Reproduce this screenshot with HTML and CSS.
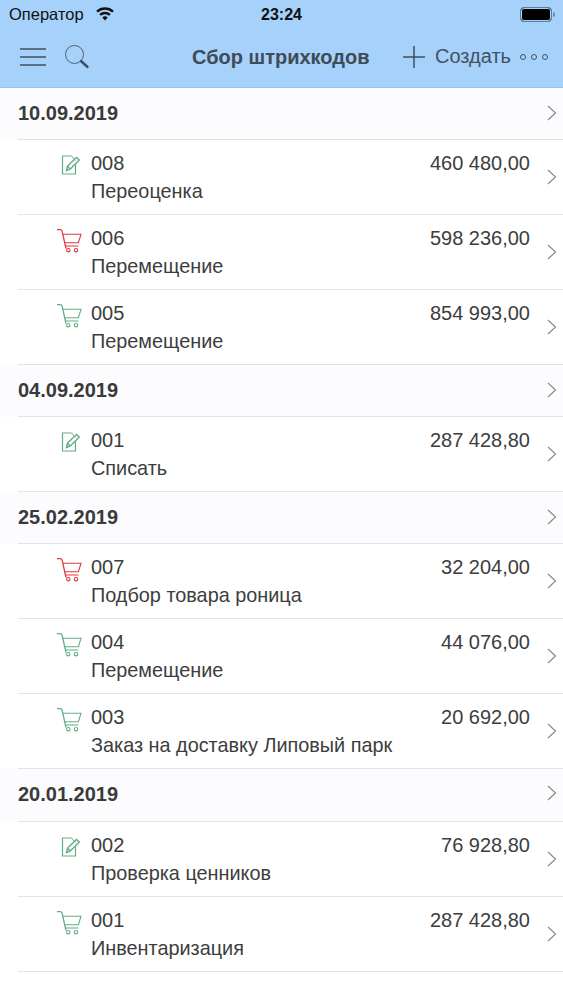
FILE: index.html
```html
<!DOCTYPE html>
<html lang="ru">
<head>
<meta charset="utf-8">
<title>Сбор штрихкодов</title>
<link rel="stylesheet" href="styles.css">
</head>
<body>
<svg class="defs" width="0" height="0" aria-hidden="true">
  <symbol id="cart" viewBox="0 0 26 26">
    <path d="M1 1.600h3.200c1 0 1.600.5 1.900 1.500L10 20.500" fill="none" stroke="currentColor" stroke-width="1.300"/>
    <path d="M6.800 6.300H25l-2.600 8.400H8.800M9.800 18h12.600" fill="none" stroke="currentColor" stroke-width="1.100"/>
    <circle cx="12.300" cy="22.200" r="1.700" fill="none" stroke="currentColor" stroke-width="1.100"/>
    <circle cx="20" cy="22.200" r="1.700" fill="none" stroke="currentColor" stroke-width="1.100"/>
  </symbol>
  <symbol id="note" viewBox="0 0 20 20">
    <path d="M10.500 1H1.500v18h13v-9.500" fill="none" stroke="currentColor" stroke-width="1.200"/>
    <path d="M10.500 1l4 4.500" fill="none" stroke="currentColor" stroke-width="1"/>
    <path d="M5.500 15.500l1-4.500L15.500 2.500l2.800 2.500L9.300 14z" fill="none" stroke="currentColor" stroke-width="1.400"/>
    <path d="M6.500 11l2.800 3" fill="none" stroke="currentColor" stroke-width="1.200"/>
  </symbol>
  <symbol id="chev" viewBox="0 0 10 16">
    <path d="M1 1l7.500 7L1 15" fill="none" stroke="currentColor" stroke-width="1.200"/>
  </symbol>
</svg>

<header class="top">
  <div class="status">
    <div class="status-left">
      <span>Оператор</span>
      <svg class="wifi" viewBox="0 0 20 14" width="20" height="14">
        <path d="M10 13.500L7.300 10.400a4 4 0 0 1 5.400 0z" fill="#111"/>
        <path d="M5.800 8.700a6.400 6.400 0 0 1 8.400 0l1.500-1.700a8.700 8.700 0 0 0-11.400 0z" fill="#111"/>
        <path d="M2.800 5.400a10.800 10.800 0 0 1 14.400 0l1.600-1.700a13.200 13.200 0 0 0-17.600 0z" fill="#111"/>
      </svg>
    </div>
    <div class="clock">23:24</div>
    <div class="battery"><span class="battery-fill"></span><span class="battery-cap"></span></div>
  </div>
  <nav class="nav">
    <div class="nav-left">
      <svg width="26" height="18" viewBox="0 0 26 18"><path d="M0 1h26M0 9h26M0 17h26" stroke="#3f4f5e" stroke-width="1.500"/></svg>
      <svg width="26" height="26" viewBox="0 0 26 26"><circle cx="10.500" cy="10.500" r="9" fill="none" stroke="#55636f" stroke-width="1"/><path d="M17 17l6.500 6" stroke="#3f4f5e" stroke-width="2.400" stroke-linecap="round"/></svg>
    </div>
    <div class="nav-title">Сбор штрихкодов</div>
    <div class="nav-right">
      <svg width="22" height="22" viewBox="0 0 22 22"><path d="M0 11h22M11 0v22" stroke="#3f4f5e" stroke-width="1.500"/></svg>
      <span class="create">Создать</span>
      <span class="dots"><i></i><i></i><i></i></span>
    </div>
  </nav>
</header>

<main class="list">
  <div class="date"><span>10.09.2019</span><svg class="chev"><use href="#chev"/></svg></div>
  <div class="row"><svg class="ico note green"><use href="#note"/></svg><div class="texts"><div class="line"><span>008</span><span>460 480,00</span></div><div class="name">Переоценка</div></div><svg class="chev"><use href="#chev"/></svg></div>
  <div class="row"><svg class="ico cart red"><use href="#cart"/></svg><div class="texts"><div class="line"><span>006</span><span>598 236,00</span></div><div class="name">Перемещение</div></div><svg class="chev"><use href="#chev"/></svg></div>
  <div class="row"><svg class="ico cart green"><use href="#cart"/></svg><div class="texts"><div class="line"><span>005</span><span>854 993,00</span></div><div class="name">Перемещение</div></div><svg class="chev"><use href="#chev"/></svg></div>

  <div class="date"><span>04.09.2019</span><svg class="chev"><use href="#chev"/></svg></div>
  <div class="row"><svg class="ico note green"><use href="#note"/></svg><div class="texts"><div class="line"><span>001</span><span>287 428,80</span></div><div class="name">Списать</div></div><svg class="chev"><use href="#chev"/></svg></div>

  <div class="date"><span>25.02.2019</span><svg class="chev"><use href="#chev"/></svg></div>
  <div class="row"><svg class="ico cart red"><use href="#cart"/></svg><div class="texts"><div class="line"><span>007</span><span>32 204,00</span></div><div class="name">Подбор товара роница</div></div><svg class="chev"><use href="#chev"/></svg></div>
  <div class="row"><svg class="ico cart green"><use href="#cart"/></svg><div class="texts"><div class="line"><span>004</span><span>44 076,00</span></div><div class="name">Перемещение</div></div><svg class="chev"><use href="#chev"/></svg></div>
  <div class="row"><svg class="ico cart green"><use href="#cart"/></svg><div class="texts"><div class="line"><span>003</span><span>20 692,00</span></div><div class="name">Заказ на доставку Липовый парк</div></div><svg class="chev"><use href="#chev"/></svg></div>

  <div class="date tall"><span>20.01.2019</span><svg class="chev"><use href="#chev"/></svg></div>
  <div class="row"><svg class="ico note green"><use href="#note"/></svg><div class="texts"><div class="line"><span>002</span><span>76 928,80</span></div><div class="name">Проверка ценников</div></div><svg class="chev"><use href="#chev"/></svg></div>
  <div class="row"><svg class="ico cart green"><use href="#cart"/></svg><div class="texts"><div class="line"><span>001</span><span>287 428,80</span></div><div class="name">Инвентаризация</div></div><svg class="chev"><use href="#chev"/></svg></div>
</main>
</body>
</html>
```

FILE: styles.css
```css
* { box-sizing: border-box; }
html, body { margin: 0; padding: 0; }
body {
  width: 563px;
  height: 1000px;
  overflow: hidden;
  background: #fff;
  font-family: "Liberation Sans", Arial, sans-serif;
  color: #3d3d3d;
}
.defs { position: absolute; }

.top {
  height: 88px;
  background: #a5d1fb;
  border-bottom: 1px solid #9cc3e6;
}
.status {
  height: 29px;
  display: flex;
  align-items: center;
  justify-content: space-between;
  padding: 0 9px;
  color: #111;
  position: relative;
}
.status-left { display: flex; align-items: center; gap: 11px; font-size: 16.500px; }
.wifi { margin-top: -1px; }
.clock {
  position: absolute;
  left: 261px;
  top: 6px;
  font-size: 16px;
  font-weight: 700;
}
.battery {
  display: flex;
  align-items: center;
  margin-right: -1px;
}
.battery-fill {
  width: 32px;
  height: 15px;
  background: #000;
  border-radius: 4px;
  border: 1.500px solid #5d7d9c;
  box-shadow: inset 0 0 0 1px #a5d1fb;
}
.battery-cap { width: 2px; height: 5px; background: #6f8ba5; border-radius: 0 2px 2px 0; margin-left: 1px; }

.nav {
  height: 57px;
  display: flex;
  align-items: center;
  justify-content: space-between;
  padding: 0 14px 2px 20px;
  position: relative;
  color: #3f4f5e;
}
.nav-left { display: flex; align-items: center; gap: 18px; }
.nav-title {
  position: absolute;
  left: 192px;
  top: 17px;
  font-size: 20px;
  font-weight: 700;
  color: #3f4b57;
}
.nav-right { display: flex; align-items: center; margin-right: 3px; }
.create { margin-left: 10px; font-size: 20px; color: #44525f; }
.dots { display: flex; gap: 5px; margin-left: 9px; margin-right: -2px; }
.dots i { width: 6px; height: 6px; border: 1px solid #44525f; border-radius: 50%; }

.list { display: flex; flex-direction: column; }
.date {
  height: 52px;
  flex: none;
  padding: 0 6px 1px 18px;
  display: flex;
  align-items: center;
  justify-content: space-between;
  font-size: 20px;
  font-weight: 700;
  background: #fcfcfe;
  color: #3a3a3a;
  position: relative;
}
.date.tall { height: 53px; padding-bottom: 3px; }
.date::after {
  content: "";
  position: absolute;
  left: 18px;
  right: 0;
  bottom: 0;
  border-bottom: 1px solid #e3e3e3;
}
.chev { width: 10px; height: 16px; color: #8a8a8a; flex: none; margin-bottom: 2px; }
.row {
  height: 75px;
  flex: none;
  display: flex;
  align-items: center;
  position: relative;
  padding-left: 56px;
  padding-right: 6px;
}
.row::after {
  content: "";
  position: absolute;
  left: 18px;
  right: 0;
  bottom: 0;
  border-bottom: 1px solid #e3e3e3;
}
.ico { flex: none; position: absolute; }
.ico.cart { left: 56px; top: 13px; width: 26px; height: 26px; }
.ico.note { left: 61px; top: 15px; width: 20px; height: 20px; }
.green { color: #62ad87; }
.red { color: #e03a3e; }
.texts { flex: 1; margin-left: 35px; margin-right: 17px; }
.line { display: flex; justify-content: space-between; font-size: 20px; line-height: 24px; margin-top: -2px; color: #3d3d3d; }
.name { font-size: 19.850px; line-height: 24px; margin-top: 4px; color: #3d3d3d; }
```
